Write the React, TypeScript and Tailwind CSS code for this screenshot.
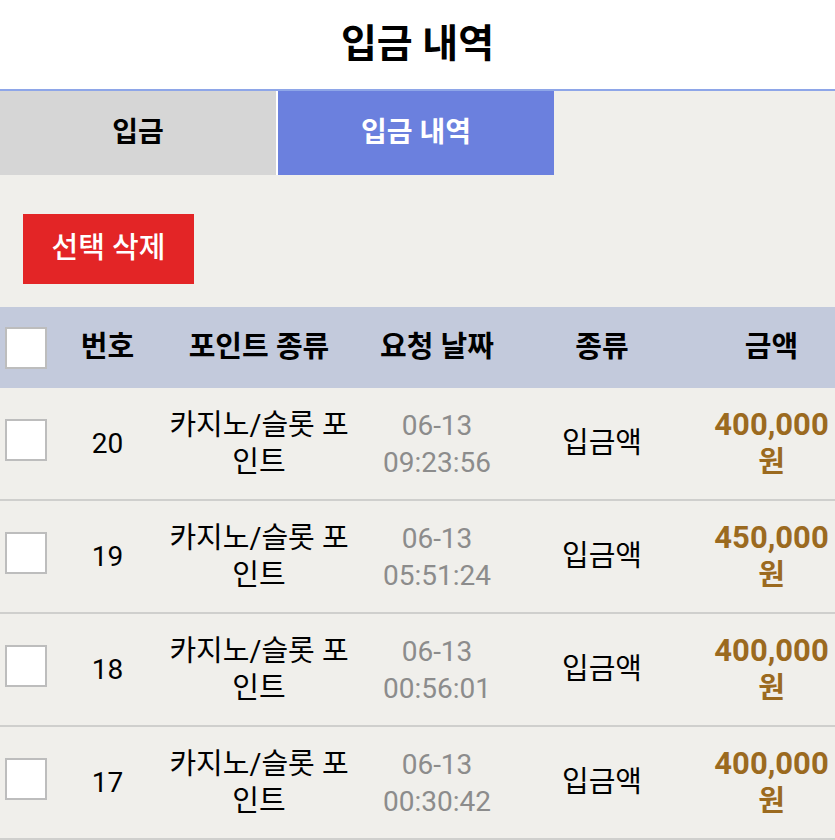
const rows = [
  { id: 20, date: "06-13", time: "09:23:56", amount: "400,000" },
  { id: 19, date: "06-13", time: "05:51:24", amount: "450,000" },
  { id: 18, date: "06-13", time: "00:56:01", amount: "400,000" },
  { id: 17, date: "06-13", time: "00:30:42", amount: "400,000" },
];

// Roboto for digits, Hangul falls through to Noto CJK
const font = { fontFamily: 'Roboto, "Noto Sans CJK KR", "Noto Sans", sans-serif' };

function Box() {
  return <div className="w-[42px] h-[42px] bg-white border-2 border-[#bdbdbd]" />;
}

const cols = "grid grid-cols-[55px_105px_198px_158px_172px_147px] items-center";

export default function App() {
  return (
    <div className="w-[835px] h-[840px] overflow-hidden bg-[#f0efeb] text-black" style={font}>
      <div className="h-[89px] bg-white flex items-center justify-center">
        <h1 className="text-[39px] font-bold leading-none">입금 내역</h1>
      </div>
      <div className="h-[2px] bg-[#8ea6e8]" />

      <div className="flex h-[84px]">
        <div className="w-[276px] bg-[#d6d6d6] flex items-center justify-center text-[28px] font-bold">
          입금
        </div>
        <div className="w-[2px] bg-white" />
        <div className="w-[276px] bg-[#6b80de] flex items-center justify-center text-[28px] font-bold text-white">
          입금 내역
        </div>
      </div>

      <div className="pt-[39px] pl-[23px] pb-[23px]">
        <button className="w-[171px] h-[70px] bg-[#e32526] text-white text-[29px] font-medium">
          선택 삭제
        </button>
      </div>

      <div className={`${cols} h-[81px] bg-[#c3cadc] text-[29px] font-bold`}>
        <div className="pl-[5px]">
          <Box />
        </div>
        <div className="text-center">번호</div>
        <div className="text-center">포인트 종류</div>
        <div className="text-center">요청 날짜</div>
        <div className="text-center">종류</div>
        <div className="text-center pl-[20px]">금액</div>
      </div>

      {rows.map((r) => (
        <div key={r.id} className={`${cols} h-[113px] border-b-2 border-[#cfcfcd] text-[28px] leading-[37px]`}>
          <div className="pl-[5px] mb-[8px]">
            <Box />
          </div>
          <div className="text-center">{r.id}</div>
          <div className="text-center text-[29px]">
            카지노/슬롯 포<br />인트
          </div>
          <div className="text-center text-[#8c8c8c]">
            {r.date}
            <br />
            {r.time}
          </div>
          <div className="text-center text-[29px]">입금액</div>
          <div className="text-center pl-[20px] font-bold text-[31px] text-[#9b6a1f]">
            {r.amount}
            <br />
            <span className="text-[29px]">원</span>
          </div>
        </div>
      ))}
    </div>
  );
}
